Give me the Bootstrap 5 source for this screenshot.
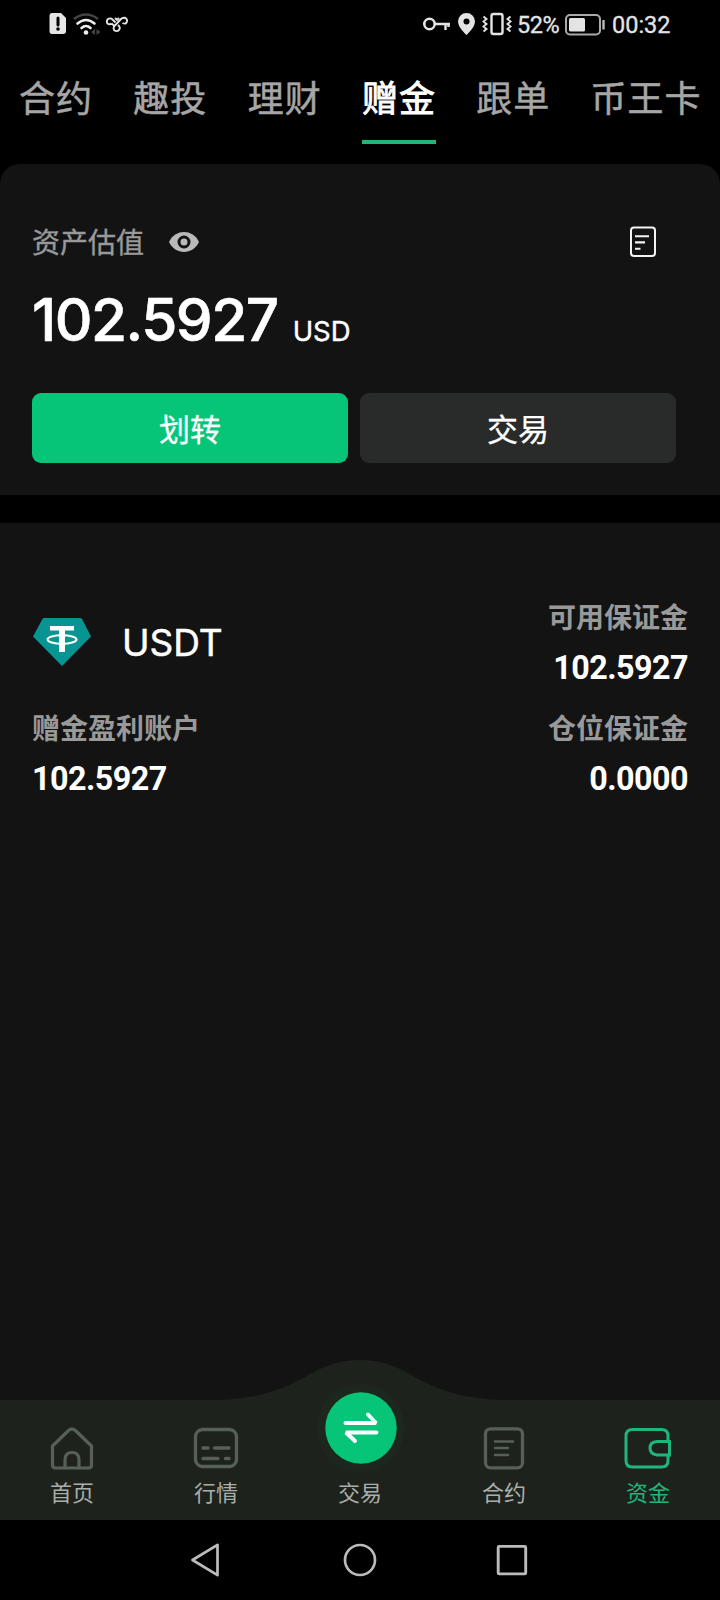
<!DOCTYPE html>
<html lang="zh-CN">
<head>
<meta charset="utf-8">
<meta name="viewport" content="width=device-width, initial-scale=1">
<title>资金</title>
<link href="https://cdn.jsdelivr.net/npm/bootstrap@5.3.0/dist/css/bootstrap.min.css" rel="stylesheet">
<style>
body{background:#000;color:#fff;font-family:Roboto,"Noto Sans CJK SC",sans-serif;}
.app{width:720px;height:1600px;overflow:hidden}
svg{display:block;flex:none}
.status{height:50px;padding:0 50px 0 49px;color:#e4e4e4;font-size:23.5px;line-height:50px;-webkit-text-stroke:.3px}
.tabs{height:114px;padding:0 19px;gap:40.3px;color:#a6a6a6;font-size:36px;letter-spacing:1px;-webkit-text-stroke:.5px}
.tabs a{color:inherit;text-decoration:none;height:94px;padding-top:4px;line-height:92px;white-space:nowrap;border-bottom:4px solid transparent}
.tabs a.active{color:#fff;border-color:#1fb57b;-webkit-text-stroke:.9px}
.panel{background:#131313}
.valuation{height:331px;border-radius:20px 20px 0 0;padding:57px 44px 32px 32px}
.label{color:#999;font-size:28px;line-height:38px;padding-top:4px}
.valuation .label{-webkit-text-stroke:.4px}
.amount{font:500 58.5px/64px Inter,sans-serif;letter-spacing:-1.5px;-webkit-text-stroke:.6px}
.unit{font:400 27.5px/32px Inter,sans-serif;margin-left:15px;-webkit-text-stroke:.4px}
.action{height:70px;border-radius:9px;font-size:31px;color:#fff;border:0;line-height:65px;padding:5px 0 0;-webkit-text-stroke:.3px}
.action:hover{color:#fff}
.green{background:#06c478}
.grey{background:#292b2a}
.holdings{flex:1;margin-top:28px;padding:73px 32px 0}
.holdings .label,.val{font-weight:700}
.val{font-size:32.3px;line-height:37px;margin-top:9px;padding-top:3px;letter-spacing:-.55px}
.coin{font:400 37px/42px Inter,sans-serif;margin-left:30px;padding-top:2px;-webkit-text-stroke:.5px}
.tabbar{height:120px;background:#1d221d;color:#aaaeaa;font-size:22px;line-height:30px}
.wave{left:0;top:-40px}
.item{padding-top:27px;gap:8px}
.dim{color:#566056}
.on{color:#1fb57b}
.sys{height:80px}
</style>
</head>
<body>
<div class="app d-flex flex-column">
  <header class="status d-flex align-items-center">
    <svg width="80" height="50" viewBox="49 0 80 50" fill="none">
      <path d="M52 13h9l5 5v13q0 3-3 3H52q-2.500 0-2.500-3V16q0-3 2.500-3z" fill="#e6e6e6"/>
      <path d="M58 18v7" stroke="#000" stroke-width="3" stroke-linecap="round"/><circle cx="58" cy="29" r="1.800" fill="#000"/>
      <path d="M74 19q12-9 24 0" stroke="#444" stroke-width="2.600"/>
      <path d="M77.500 23.500q8.500-7 17 0M81.500 28q4.500-4 9 0" stroke="#eee" stroke-width="2.600" stroke-linecap="round"/>
      <circle cx="86" cy="32.500" r="2.300" fill="#eee"/>
      <path d="M95 29v6l-4-3zM96.500 29v6l4-3z" fill="#444"/>
      <path d="M115 26.500 111.500 23.500M111.500 23.500q-2 1.500-4 0-1.500-2.500.5-4.500 2.500-1.500 4.500.5l3 3M122.500 23q3 1.500 4-.5 1.500-3-1-4.500-2.500-1-4.500 1l-7 7.500q-1 2.500.5 4 2.500 1.500 4.500-.5 1.500-2 0-4l-1-1M115 18l2 2 2-2" stroke="#e6e6e6" stroke-width="1.900"/>
    </svg>
    <div class="ms-auto d-flex align-items-center">
      <svg width="94" height="50" viewBox="423 0 94 50" fill="none" stroke="#e4e4e4">
        <circle cx="429.500" cy="24" r="5.200" stroke-width="2.600"/><path d="M435 24h15M445.500 24v6M448.500 24v3" stroke-width="2.400"/>
        <path d="M466.500 13a8.500 8.500 0 0 0-8.500 8.500c0 6 8.500 13.500 8.500 13.500s8.500-7.500 8.500-13.500a8.500 8.500 0 0 0-8.500-8.500zm0 5.500a3 3 0 1 1 0 6 3 3 0 0 1 0-6z" fill="#e4e4e4" fill-rule="evenodd" stroke="none"/>
        <rect x="491.500" y="14" width="11" height="20" rx="2" stroke-width="2.400"/>
        <path d="M483.500 16.500l3 2.500-3 2.500 3 2.500-3 2.500 3 2.500-3 2.500M510.500 16.500l-3 2.500 3 2.500-3 2.500 3 2.500-3 2.500 3 2.500" stroke-width="1.900"/>
      </svg>
      <span style="width:48px;letter-spacing:-.4px">52%</span>
      <svg width="47" height="50" viewBox="565 0 47 50" fill="none">
        <rect x="566" y="15" width="34" height="19.500" rx="4" stroke="#aaa" stroke-width="2"/><rect x="569" y="18" width="16" height="13.500" rx="1.500" fill="#e4e4e4"/><path d="M603.500 20v9.500" stroke="#bbb" stroke-width="2.400"/>
      </svg>
      <span style="width:58px">00:32</span>
    </div>
  </header>

  <nav class="tabs d-flex align-items-start">
    <a href="#">合约</a><a href="#">趣投</a><a href="#">理财</a><a href="#" class="active">赠金</a><a href="#">跟单</a><a href="#">币王卡</a>
  </nav>

  <section class="panel valuation d-flex flex-column">
    <div class="d-flex align-items-center">
      <span class="label">资产估值</span>
      <svg class="ms-4" width="32" height="22" viewBox="0 0 32 22"><path d="M1 11C7-2.300 25-2.300 31 11 25 24.300 7 24.300 1 11z" fill="#bababa"/><circle cx="16" cy="11" r="5" fill="#bababa" stroke="#131313" stroke-width="3"/></svg>
      <svg class="ms-auto" style="margin-right:19px" width="28" height="32" viewBox="0 0 28 32" fill="none" stroke="#f4f4f4"><rect x="2" y="1.500" width="24" height="28.500" rx="3" stroke-width="2"/><path d="M6 10.200h14M6 16.400h10M6 22.700h5.500" stroke-width="2.100"/></svg>
    </div>
    <div class="d-flex align-items-baseline" style="margin-top:25px">
      <span class="amount">102.5927</span><span class="unit">USD</span>
    </div>
    <div class="d-flex mt-auto" style="gap:12px">
      <button class="btn action green flex-fill w-50">划转</button>
      <button class="btn action grey flex-fill w-50">交易</button>
    </div>
  </section>

  <section class="panel holdings">
    <div class="d-flex justify-content-between">
      <div class="d-flex align-items-center">
        <svg width="60" height="50" viewBox="0 0 60 50"><path d="M12 1h36q1.500 0 2 1l9 17.500L30 49 1 19.500 10.500 2q.5-1 1.500-1z" fill="#079593"/><path d="M18 9h24v4.500h-9V35h-6V13.500h-9z" fill="#fff"/><ellipse cx="30" cy="22.500" rx="14.500" ry="4.200" fill="none" stroke="#fff" stroke-width="2"/></svg>
        <span class="coin">USDT</span>
      </div>
      <div class="text-end"><div class="label">可用保证金</div><div class="val">102.5927</div></div>
    </div>
    <div class="d-flex justify-content-between" style="margin-top:20px">
      <div><div class="label">赠金盈利账户</div><div class="val">102.5927</div></div>
      <div class="text-end"><div class="label">仓位保证金</div><div class="val">0.0000</div></div>
    </div>
  </section>

  <nav class="tabbar position-relative">
    <svg class="wave position-absolute" width="720" height="41" viewBox="0 0 720 41"><path d="M216 41V40C258 39 281 30 305 17 325 5 341 0 360 0S395 5 415 17C439 30 462 39 504 40v1z" fill="#1d221d"/></svg>
    <div class="d-flex position-relative h-100 text-center">
      <div class="item col d-flex flex-column align-items-center"><svg class="dim" width="44" height="44" viewBox="0 0 44 44" fill="none" stroke="currentColor" stroke-width="3.200"><path d="M2.500 19 18 4q4-4 8 0l15.500 15V38q0 3-3 3h-33q-3 0-3-3z" stroke-linejoin="round"/><path d="M15 41V33q0-7.500 7-7.500t7 7.500v8"/></svg><span>首页</span></div>
      <div class="item col d-flex flex-column align-items-center"><svg class="dim" width="46" height="44" viewBox="0 0 46 44" fill="none" stroke="currentColor" stroke-width="3.300"><rect x="2.500" y="2.500" width="41" height="37" rx="7"/><path d="M10 21h5M21.500 21H36M10 31.500h15M32.500 31.500H36" stroke-linecap="round"/></svg><span>行情</span></div>
      <div class="item col d-flex flex-column align-items-center" style="padding-top:0;gap:0"><svg style="margin-top:-17px" width="92" height="92" viewBox="0 0 92 92"><circle cx="46.500" cy="45" r="44" fill="#1d271e"/><circle cx="47" cy="45" r="35.700" fill="#06c478"/><path d="M31.500 40H62L54 31.500M62.500 49.500H32L41 58" fill="none" stroke="#fff" stroke-width="4" stroke-linecap="round" stroke-linejoin="bevel"/></svg><span style="margin-top:4px">交易</span></div>
      <div class="item col d-flex flex-column align-items-center"><svg class="dim" width="42" height="44" viewBox="0 0 42 44" fill="none" stroke="currentColor" stroke-width="3.300"><rect x="2.500" y="1.800" width="37" height="39" rx="5"/><path d="M12 14.500h18M12 21h13M12 28h13" stroke-width="2.500" stroke-linecap="round"/></svg><span>合约</span></div>
      <div class="item on col d-flex flex-column align-items-center"><svg width="48" height="44" viewBox="0 0 48 44" fill="none" stroke="currentColor" stroke-width="3"><path d="M44 14V9q0-6.500-6.500-6.500h-29Q2 2.500 2 9v24.500Q2 40 8.500 40h29q6.500 0 6.500-6.500V28M45.500 14.500H33q-7 .5-7 6.500t7 7h12.500z"/></svg><span>资金</span></div>
    </div>
  </nav>

  <footer class="sys d-flex justify-content-center align-items-center" style="gap:118px">
    <svg width="34" height="36" viewBox="0 0 34 36" fill="none" stroke="#bbb" stroke-width="2.700"><path d="M1.500 18 26.500 2.800v30.400z" stroke-linejoin="round"/></svg>
    <svg width="34" height="36" viewBox="0 0 34 36" fill="none" stroke="#bbb" stroke-width="2.700"><circle cx="17" cy="18" r="15"/></svg>
    <svg width="34" height="36" viewBox="0 0 34 36" fill="none" stroke="#bbb" stroke-width="2.900"><rect x="3.200" y="4.400" width="27.500" height="27.500" rx="1"/></svg>
  </footer>
</div>
<script src="https://cdn.jsdelivr.net/npm/bootstrap@5.3.0/dist/js/bootstrap.bundle.min.js"></script>
</body>
</html>
